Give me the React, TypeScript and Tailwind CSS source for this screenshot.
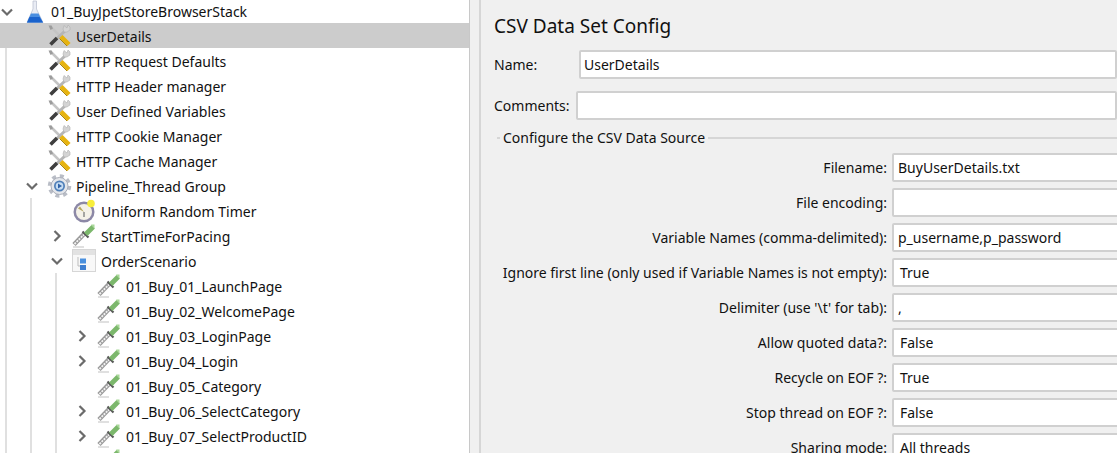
import type { ReactNode } from "react";

const FONT = "font-['Noto_Sans','Open_Sans',sans-serif]";

const Chevron = ({ open }: { open?: boolean }) => (
  <svg width="14" height="14" viewBox="0 0 14 14" fill="none" stroke="#6b6b6b" strokeWidth="2.2">
    <path d={open ? "M2 4.500 7 9.500 12 4.500" : "M4.500 2 9.500 7 4.500 12"} />
  </svg>
);

const Flask = () => (
  <svg width="24" height="24" viewBox="0 0 24 24">
    <path d="M11 1h3.500v8l6.500 13.500H5L11 9z" fill="#e9ecf4" stroke="#bcc3d2" strokeWidth="0.800" />
    <path d="M9 13.500h7.500l4.500 9H5z" fill="#4a8ee0" />
    <path d="M7.500 17h10l3.500 5.500H5z" fill="#1a62cc" />
  </svg>
);

const Tools = () => (
  <svg width="25" height="24" viewBox="0 0 25 24">
    <path d="M3 2 14 13" stroke="#c4c4c4" strokeWidth="2.500" />
    <path d="M1.500 1.500h3l1.500 3-2.500 1.500z" fill="#9c9c9c" />
    <path d="M19 6 4 20" stroke="#b5b5b5" strokeWidth="3" />
    <path d="M17 1.500 20 4l1-3 2 2v3l-3 2h-3l-1-3z" fill="#d4d4d4" stroke="#b0b0b0" strokeWidth="0.600" />
    <path d="M10 14 3.500 20.500" stroke="#3f3f3f" strokeWidth="3.500" />
    <path d="M14 12.500 22 20.500" stroke="#e6b30f" strokeWidth="4.500" />
    <path d="M12.500 14.500 20 22" stroke="#a98410" strokeWidth="1" />
  </svg>
);

const Gear = () => (
  <svg width="25" height="24" viewBox="0 0 25 24">
    <circle cx="12.500" cy="12" r="10" fill="none" stroke="#b9bdc6" strokeWidth="3.500" strokeDasharray="4 3.850" />
    <circle cx="12.500" cy="12" r="8.500" fill="#e4e6ea" stroke="#a9adb8" />
    <circle cx="12.500" cy="12" r="5.500" fill="#4f7fb8" />
    <circle cx="12.500" cy="12" r="3.800" fill="#c6dcf2" />
    <path d="M11 9.500v5l4-2.500z" fill="#2f62a8" />
  </svg>
);

const Timer = () => (
  <svg width="24" height="24" viewBox="0 0 24 24">
    <circle cx="12" cy="13" r="10.500" fill="#8c88a6" />
    <circle cx="12" cy="13" r="8" fill="#f4f1e8" />
    <path d="M12 13 8 7.500 6 9.500z" fill="#b5a860" />
    <path d="M12 13v5" stroke="#8a8a8a" strokeWidth="1.500" />
    <circle cx="19" cy="4.500" r="3.800" fill="#f8ee3c" />
  </svg>
);

const Dropper = () => (
  <svg width="24" height="24" viewBox="0 0 24 24">
    <path d="M2 20.500 12.500 9.500" stroke="#9a9a9a" strokeWidth="4.500" />
    <path d="M2.500 20 12 10.500" stroke="#f2f2f2" strokeWidth="1.800" strokeDasharray="2 1" />
    <path d="M10.500 7.500 16.500 13.500" stroke="#5a5a5a" strokeWidth="2.200" />
    <path d="M13.500 8.500 19.500 2.500 21.500 4.500 15.500 10.500z" fill="#7cb86c" stroke="#7cb86c" strokeWidth="2" />
    <path d="M19 0.500h3.500v4z" fill="#a8d898" />
    <path d="M1 23h11" stroke="#d6d6d6" strokeWidth="1.500" />
  </svg>
);

const Fragment = () => (
  <svg width="24" height="24" viewBox="0 0 24 24">
    <rect x="0.500" y="0.500" width="23" height="22" fill="#f8f8f8" stroke="#d6d6d6" />
    <rect x="1" y="1" width="22" height="5" fill="#e2e2e2" />
    <path d="M6 8v9h3" fill="none" stroke="#bdbdbd" />
    <rect x="8" y="9.500" width="6" height="5" fill="#4a90de" />
    <rect x="8" y="16" width="6" height="5" fill="#3f7fd0" />
  </svg>
);

function Row({
  icon,
  label,
  arrow,
  selected,
  className = "h-[25px]",
  labelClass = "pt-[2px]",
}: {
  icon: ReactNode;
  label: string;
  arrow?: "open" | "closed";
  selected?: boolean;
  className?: string;
  labelClass?: string;
}) {
  return (
    <div className={`flex items-center ${className} ${selected ? "bg-[#cccccc]" : ""}`}>
      <span className="flex w-[22px] shrink-0">{arrow && <Chevron open={arrow === "open"} />}</span>
      <span className="w-[29px] shrink-0">{icon}</span>
      <span className={`${labelClass} whitespace-nowrap`}>{label}</span>
    </div>
  );
}

function Guide({ children }: { children: ReactNode }) {
  return <div className="ml-[5px] border-l-2 border-[#e0e0e0] pl-[18px]">{children}</div>;
}

const ELEMENTS = [
  "HTTP Request Defaults",
  "HTTP Header manager",
  "User Defined Variables",
  "HTTP Cookie Manager",
  "HTTP Cache Manager",
];

const SAMPLERS: { label: string; arrow?: "closed" }[] = [
  { label: "01_Buy_01_LaunchPage" },
  { label: "01_Buy_02_WelcomePage" },
  { label: "01_Buy_03_LoginPage", arrow: "closed" },
  { label: "01_Buy_04_Login", arrow: "closed" },
  { label: "01_Buy_05_Category" },
  { label: "01_Buy_06_SelectCategory", arrow: "closed" },
  { label: "01_Buy_07_SelectProductID", arrow: "closed" },
];

const FIELDS = [
  { label: "Filename:", value: "BuyUserDetails.txt" },
  { label: "File encoding:", value: "" },
  { label: "Variable Names (comma-delimited):", value: "p_username,p_password" },
  { label: "Ignore first line (only used if Variable Names is not empty):", value: "True", inset: true },
  { label: "Delimiter (use '\\t' for tab):", value: "," },
  { label: "Allow quoted data?:", value: "False", inset: true },
  { label: "Recycle on EOF ?:", value: "True", inset: true },
  { label: "Stop thread on EOF ?:", value: "False", inset: true },
  { label: "Sharing mode:", value: "All threads", inset: true },
];

const INPUT = "h-[29px] rounded-[2px] border-2 border-[#d0d0d0] bg-white flex items-center";

export default function App() {
  return (
    <div className={`${FONT} flex h-[453px] w-[1117px] overflow-hidden bg-[#f0f0f0] text-[14px] text-[#111]`}>
      {/* Test plan tree */}
      <div className="w-[470px] shrink-0 border-r border-[#c8c8c8] bg-white">
        <Row className="h-[23px]" labelClass="pt-0" arrow="open" icon={<Flask />} label="01_BuyJpetStoreBrowserStack" />
        <Guide>
          <Row selected className="-ml-[25px] pl-[25px] h-[25px]" icon={<Tools />} label="UserDetails" />
          {ELEMENTS.map((name) => (
            <Row key={name} className="-ml-[25px] pl-[25px] h-[25px]" icon={<Tools />} label={name} />
          ))}
          <Row arrow="open" className="h-[25px]" icon={<Gear />} label="Pipeline_Thread Group" />
          <Guide>
            <Row icon={<Timer />} label="Uniform Random Timer" />
            <Row arrow="closed" icon={<Dropper />} label="StartTimeForPacing" />
            <Row arrow="open" icon={<Fragment />} label="OrderScenario" />
            <Guide>
              {SAMPLERS.map((s) => (
                <Row key={s.label} arrow={s.arrow} icon={<Dropper />} label={s.label} />
              ))}
              <Row icon={<Dropper />} label="" />
            </Guide>
          </Guide>
        </Guide>
      </div>

      {/* Splitter */}
      <div className="w-[11px] shrink-0 border-r-2 border-[#d6d6d6]" />

      {/* CSV config form */}
      <div className="min-w-0 flex-1 pl-[13px]">
        <h1 className="mt-[11px] h-[30px] text-[19px] leading-[30px] font-normal">CSV Data Set Config</h1>
        <div className="mt-[9px] flex items-center">
          <span className="w-[85px] shrink-0">Name:</span>
          <div className={`${INPUT} w-[600px] pl-[3px]`}>UserDetails</div>
        </div>
        <div className="mt-[12px] flex items-center">
          <span className="w-[82px] shrink-0 whitespace-nowrap">Comments:</span>
          <div className={`${INPUT} w-[600px]`} />
        </div>
        <div className="mt-[8px] flex items-center">
          <span className="ml-[3px] h-[2px] w-[3px] bg-[#d6d6d6]" />
          <span className="mx-[3px] h-[20px] leading-[20px] whitespace-nowrap">Configure the CSV Data Source</span>
          <span className="h-[2px] flex-1 bg-[#d6d6d6]" />
        </div>
        <div className="mt-[5px] grid grid-cols-[387px_600px] items-center gap-x-[5px] gap-y-[6px] pl-[6px]">
          {FIELDS.map((f) => (
            <div key={f.label} className="contents">
              <span className="text-right whitespace-nowrap">{f.label}</span>
              <div className={`${INPUT} ${f.inset ? "pl-[6px]" : "pl-[4px]"}`}>{f.value}</div>
            </div>
          ))}
        </div>
      </div>
    </div>
  );
}
